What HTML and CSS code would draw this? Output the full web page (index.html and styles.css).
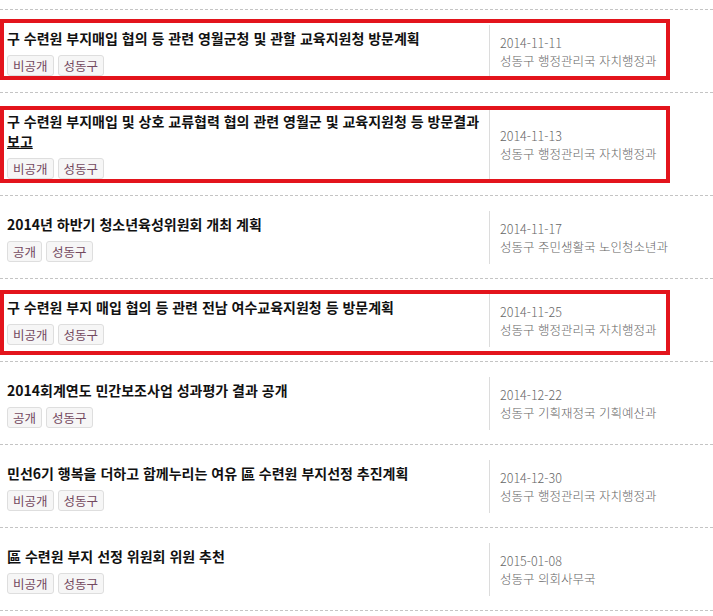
FILE: index.html
```html
<!DOCTYPE html>
<html lang="ko">
<head>
<meta charset="utf-8">
<title>목록</title>
<link rel="stylesheet" href="styles.css">
</head>
<body>
<ul class="list">
  <li class="item">
    <div class="main">
      <a class="title" href="#">구 수련원 부지매입 협의 등 관련 영월군청 및 관할 교육지원청 방문계획</a>
      <div class="tags"><span class="tag">비공개</span><span class="tag">성동구</span></div>
    </div>
    <div class="meta"><div class="date">2014-11-11</div><div class="dept">성동구 행정관리국 자치행정과</div></div>
    <div class="mark mark-1"></div>
  </li>
  <li class="item">
    <div class="main">
      <a class="title" href="#">구 수련원 부지매입 및 상호 교류협력 협의 관련 영월군 및 교육지원청 등 방문결과 <span class="hover">보고</span></a>
      <div class="tags"><span class="tag">비공개</span><span class="tag">성동구</span></div>
    </div>
    <div class="meta"><div class="date">2014-11-13</div><div class="dept">성동구 행정관리국 자치행정과</div></div>
    <div class="mark mark-2"></div>
  </li>
  <li class="item">
    <div class="main">
      <a class="title" href="#">2014년 하반기 청소년육성위원회 개최 계획</a>
      <div class="tags"><span class="tag">공개</span><span class="tag">성동구</span></div>
    </div>
    <div class="meta"><div class="date">2014-11-17</div><div class="dept">성동구 주민생활국 노인청소년과</div></div>
  </li>
  <li class="item">
    <div class="main">
      <a class="title" href="#">구 수련원 부지 매입 협의 등 관련 전남 여수교육지원청 등 방문계획</a>
      <div class="tags"><span class="tag">비공개</span><span class="tag">성동구</span></div>
    </div>
    <div class="meta"><div class="date">2014-11-25</div><div class="dept">성동구 행정관리국 자치행정과</div></div>
    <div class="mark mark-4"></div>
  </li>
  <li class="item">
    <div class="main">
      <a class="title" href="#">2014회계연도 민간보조사업 성과평가 결과 공개</a>
      <div class="tags"><span class="tag">공개</span><span class="tag">성동구</span></div>
    </div>
    <div class="meta"><div class="date">2014-12-22</div><div class="dept">성동구 기획재정국 기획예산과</div></div>
  </li>
  <li class="item">
    <div class="main">
      <a class="title" href="#">민선6기 행복을 더하고 함께누리는 여유 區 수련원 부지선정 추진계획</a>
      <div class="tags"><span class="tag">비공개</span><span class="tag">성동구</span></div>
    </div>
    <div class="meta"><div class="date">2014-12-30</div><div class="dept">성동구 행정관리국 자치행정과</div></div>
  </li>
  <li class="item">
    <div class="main">
      <a class="title" href="#">區 수련원 부지 선정 위원회 위원 추천</a>
      <div class="tags"><span class="tag">비공개</span><span class="tag">성동구</span></div>
    </div>
    <div class="meta"><div class="date">2015-01-08</div><div class="dept">성동구 의회사무국</div></div>
  </li>
</ul>
</body>
</html>
```

FILE: styles.css
```css
html, body {
  margin: 0;
  padding: 0;
  background: #fff;
}

body {
  font-family: "Noto Sans CJK KR", "Noto Sans", sans-serif;
  color: #111;
}

.list {
  list-style: none;
  margin: 9px 0 0;
  padding: 0;
  border-top: 1px dashed #c4c4c4;
}

.item {
  position: relative;
  display: flex;
  border-bottom: 1px dashed #c4c4c4;
}

.main {
  flex: 1;
  padding: 18px 0 16px 7px;
  min-width: 0;
}

.title {
  display: block;
  width: 478px;
  font-size: 14px;
  line-height: 20px;
  font-weight: 700;
  color: #111;
  text-decoration: none;
}

.hover {
  text-decoration: underline;
}

.tags {
  display: flex;
  gap: 4px;
  margin-top: 7px;
}

.tag {
  display: inline-block;
  height: 19px;
  line-height: 19px;
  padding: 0 5px;
  font-size: 12.5px;
  color: #74495f;
  background: #f6f6f6;
  border: 1px solid #dedede;
  border-radius: 3px;
}

.meta {
  width: 213px;
  margin: 15px 0 14px;
  padding-left: 10px;
  border-left: 1px solid #dcdcdc;
  display: flex;
  flex-direction: column;
  justify-content: center;
  font-size: 12.5px;
  line-height: 18px;
  color: #666;
  font-weight: 300;
}

.mark {
  position: absolute;
  left: 0;
  width: 670px;
  box-sizing: border-box;
  border: 4px solid #e3141c;
  pointer-events: none;
}

.mark-1 { top: 9px; height: 61px; }
.mark-2 { top: 13px; height: 77px; }
.mark-4 { top: 11px; height: 65px; }
```
